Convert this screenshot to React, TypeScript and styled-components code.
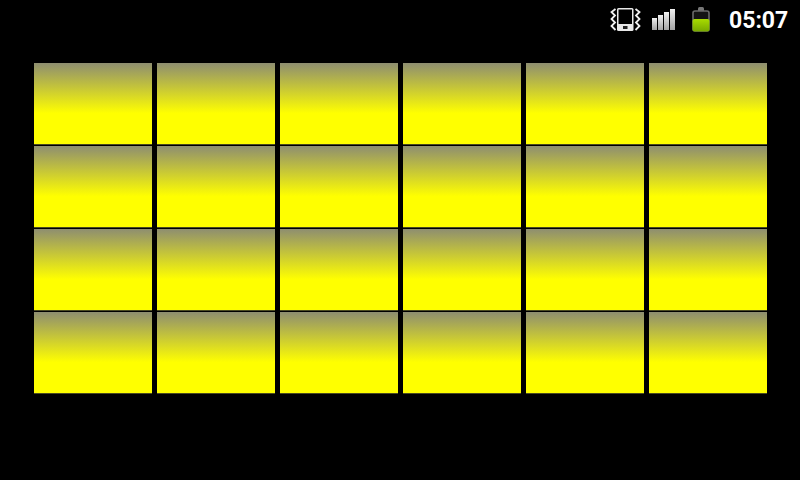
import React from "react";
import styled, { createGlobalStyle } from "styled-components";

const GlobalStyle = createGlobalStyle`
    html, body {
        margin: 0;
        padding: 0;
        background: #000;
    }
`;

const Screen = styled.div`
    width: 800px;
    height: 480px;
    overflow: hidden;
    background: #000;
`;

const StatusBar = styled.div`
    display: flex;
    justify-content: flex-end;
    align-items: center;
    height: 38px;
    padding-right: 12px;
`;

const StatusIcon = styled.svg<{ $gap: number }>`
    display: block;
    margin-right: ${p => p.$gap}px;
`;

const Clock = styled.div`
    width: 59px;
    padding-top: 3px;
    color: #fff;
    font-family: "Roboto", "Liberation Sans", sans-serif;
    font-size: 23px;
    font-weight: 700;
    line-height: 38px;
    text-align: right;
    white-space: nowrap;
`;

const Grid = styled.div`
    display: grid;
    grid-template-columns: repeat(6, 118px);
    grid-auto-rows: 81px;
    column-gap: 5px;
    row-gap: 2px;
    margin: 25px 0 0 34px;
`;

const Tile = styled.div`
    background: linear-gradient(to bottom, #8e8e70 0%, #ffff00 62%, #ffff00 100%);
    box-shadow: 0 1px 0 #4a4a20;
`;

const VibrateIcon = () => (
    <StatusIcon $gap={11} width="32" height="26" viewBox="0 0 32 26">
        <path d="M6.5 3 L2.5 6 L6 9.5 L2.5 13 L6 16.5 L2.5 20 L6.5 24" fill="none" stroke="#f0f0f0" strokeWidth="1.8" />
        <path d="M26.5 3 L30.5 6 L27 9.5 L30.5 13 L27 16.5 L30.5 20 L26.5 24" fill="none" stroke="#f0f0f0" strokeWidth="1.8" />
        <rect x="8" y="2" width="16.5" height="23" rx="1.5" fill="#e8e8e8" />
        <rect x="9.5" y="3.5" width="13.5" height="14.5" fill="#000" />
        <rect x="14" y="20" width="4.5" height="3" fill="#222" />
    </StatusIcon>
);

const SignalIcon = () => (
    <StatusIcon $gap={16} width="24" height="24" viewBox="0 0 24 24">
        <defs>
            <linearGradient id="signalBar" x1="0" y1="0" x2="0" y2="1">
                <stop offset="0" stopColor="#f0f0f0" />
                <stop offset="1" stopColor="#a4a4a4" />
            </linearGradient>
        </defs>
        <rect x="0" y="11" width="5" height="12" fill="url(#signalBar)" />
        <rect x="6" y="8" width="5" height="15" fill="url(#signalBar)" />
        <rect x="12" y="5" width="5" height="18" fill="url(#signalBar)" />
        <rect x="18" y="2" width="5" height="21" fill="url(#signalBar)" />
    </StatusIcon>
);

const BatteryIcon = () => (
    <StatusIcon $gap={19} width="18" height="26" viewBox="0 0 18 26">
        <defs>
            <linearGradient id="batteryFill" x1="0" y1="0" x2="0" y2="1">
                <stop offset="0" stopColor="#a8dc00" />
                <stop offset="1" stopColor="#78a800" />
            </linearGradient>
        </defs>
        <path d="M6 5 V2.5 Q6 1 7.5 1 H10.5 Q12 1 12 2.5 V5 Z" fill="#777" />
        <rect x="1" y="5" width="16" height="20" rx="2" fill="#141414" stroke="#6a6a6a" strokeWidth="1.6" />
        <rect x="0.5" y="13" width="17" height="12.5" rx="2" fill="url(#batteryFill)" />
    </StatusIcon>
);

const tiles = Array.from({ length: 24 }, (_, i) => i);

export default function App() {
    return (
        <Screen>
            <GlobalStyle />
            <StatusBar>
                <VibrateIcon />
                <SignalIcon />
                <BatteryIcon />
                <Clock>05:07</Clock>
            </StatusBar>
            <Grid>
                {tiles.map(it => <Tile key={it} />)}
            </Grid>
        </Screen>
    );
}
